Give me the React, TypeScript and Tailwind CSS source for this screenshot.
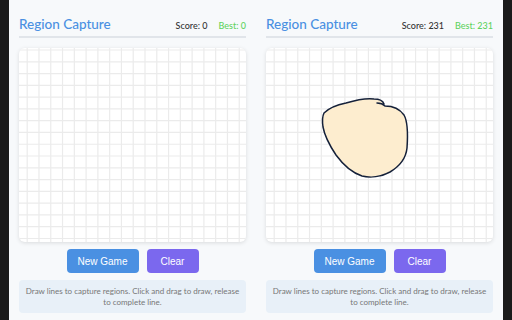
const GRID = 11.78;

function Grid({ children }: { children?: React.ReactNode }) {
  const xs: number[] = [];
  for (let x = 8.2; x < 227; x += GRID) xs.push(x);
  const ys: number[] = [];
  for (let y = 2; y < 195; y += GRID) ys.push(y);
  return (
    <svg width="227" height="194" viewBox="0 0 227 194" className="block">
      {xs.map((x) => (
        <line key={"x" + x} x1={x} y1={0} x2={x} y2={194} stroke="#ebebeb" strokeWidth="1.2" />
      ))}
      {ys.map((y) => (
        <line key={"y" + y} x1={0} y1={y} x2={227} y2={y} stroke="#ebebeb" strokeWidth="1.2" />
      ))}
      {children}
    </svg>
  );
}

function Panel({ score, best, shape }: { score: number; best: number; shape?: boolean }) {
  return (
    <div className="w-[247px] px-[10px] flex flex-col">
      <div className="h-[38px] pt-[14px] flex items-center justify-between border-b-2 border-[#e1e5ea]">
        <h1 className="text-[13.5px] font-medium text-[#4a90e2] leading-none">Region Capture</h1>
        <div className="flex gap-[11px] text-[9px] font-medium leading-none">
          <span className="text-[#333]">Score: {score}</span>
          <span className="text-[#5fd35f]">Best: {best}</span>
        </div>
      </div>
      <div className="mt-[10px] h-[194px] rounded-[6px] bg-white shadow-[0_1px_4px_rgba(0,0,0,0.12)] overflow-hidden">
        <Grid>
          {shape && (
            <path
              d="M111 55 C116 55 118 57 119 58 C126 58 133 60 138 67 C142 74 142 86 141 100 C140 110 134 118 124 124 C115 129 104 130 96 128 C87 125 78 118 70 107 C64 98 59 90 57 79 C56 72 57 67 58 65 C63 60 70 57 80 55 C90 52 100 50 108 51 C114 51 117 53 118 56"
              fill="#fdedcf"
              stroke="#15213a"
              strokeWidth="1.5"
              strokeLinejoin="round"
              strokeLinecap="round"
            />
          )}
        </Grid>
      </div>
      <div
        className="mt-[7px] flex justify-center gap-[8px]"
        style={{ fontFamily: "'Liberation Sans', Arial, sans-serif" }}
      >
        <button className="h-[24px] w-[72px] rounded-[4px] bg-[#4a90e2] text-white text-[10px]">New Game</button>
        <button className="h-[24px] w-[52px] rounded-[4px] bg-[#7b68ee] text-white text-[10px]">Clear</button>
      </div>
      <div className="mt-[7px] h-[33px] rounded-[4px] bg-[#e8f0f8] flex items-center justify-center px-[4px] text-center text-[8px] leading-[11px] text-[#777]">
        Draw lines to capture regions. Click and drag to draw, release to complete line.
      </div>
    </div>
  );
}

export default function App() {
  return (
    <div
      className="w-[512px] h-[320px] bg-[#1a1a1a] flex justify-center overflow-hidden"
      style={{ fontFamily: "Lato, 'Noto Sans', sans-serif" }}
    >
      <div className="w-[494px] h-full bg-[#f7f9fb] flex">
        <Panel score={0} best={0} />
        <Panel score={231} best={231} shape />
      </div>
    </div>
  );
}
